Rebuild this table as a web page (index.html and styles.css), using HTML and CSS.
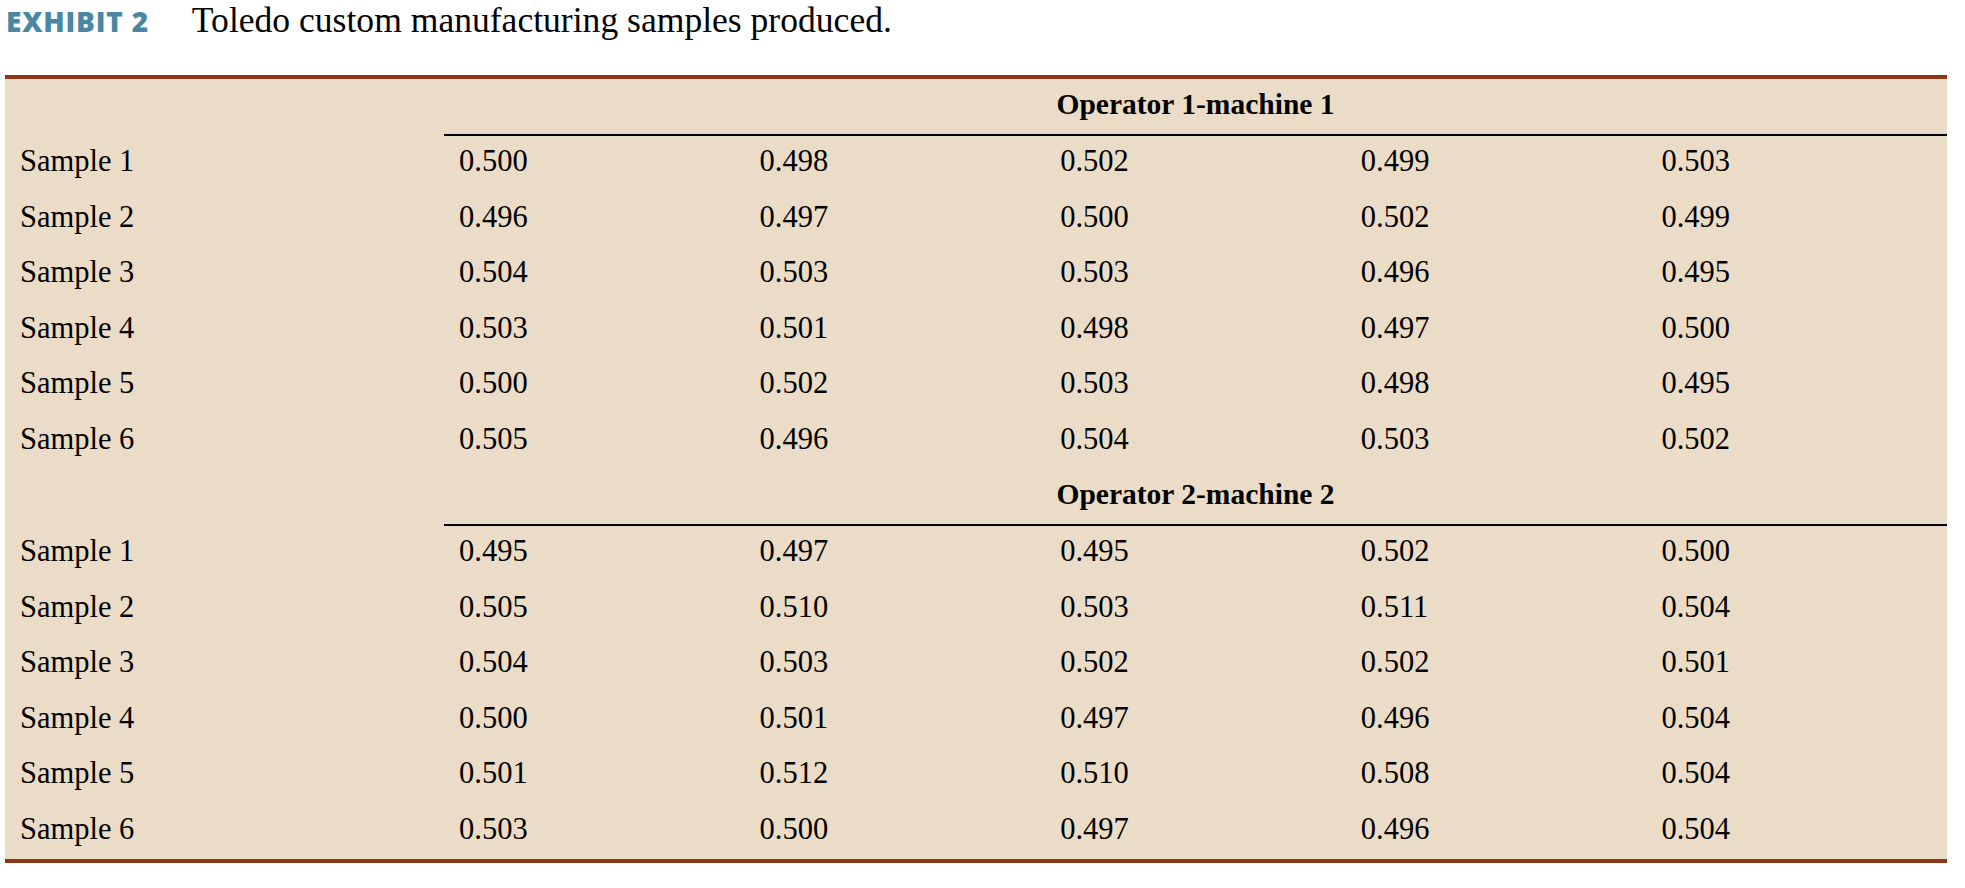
FILE: index.html
```html
<!DOCTYPE html>
<html lang="en">
<head>
<meta charset="utf-8">
<title>Exhibit 2</title>
<link rel="stylesheet" href="styles.css">
</head>
<body>
<div class="exhibit">
  <div class="caption">
    <span class="label">EXHIBIT 2</span>
    <span class="title">Toledo custom manufacturing samples produced.</span>
  </div>
  <div class="table">
    <div class="group-head"><div></div><div class="head">Operator 1-machine 1</div></div>
    <div class="row"><div>Sample 1</div><div>0.500</div><div>0.498</div><div>0.502</div><div>0.499</div><div>0.503</div></div>
    <div class="row"><div>Sample 2</div><div>0.496</div><div>0.497</div><div>0.500</div><div>0.502</div><div>0.499</div></div>
    <div class="row"><div>Sample 3</div><div>0.504</div><div>0.503</div><div>0.503</div><div>0.496</div><div>0.495</div></div>
    <div class="row"><div>Sample 4</div><div>0.503</div><div>0.501</div><div>0.498</div><div>0.497</div><div>0.500</div></div>
    <div class="row"><div>Sample 5</div><div>0.500</div><div>0.502</div><div>0.503</div><div>0.498</div><div>0.495</div></div>
    <div class="row"><div>Sample 6</div><div>0.505</div><div>0.496</div><div>0.504</div><div>0.503</div><div>0.502</div></div>
    <div class="group-head"><div></div><div class="head">Operator 2-machine 2</div></div>
    <div class="row"><div>Sample 1</div><div>0.495</div><div>0.497</div><div>0.495</div><div>0.502</div><div>0.500</div></div>
    <div class="row"><div>Sample 2</div><div>0.505</div><div>0.510</div><div>0.503</div><div>0.511</div><div>0.504</div></div>
    <div class="row"><div>Sample 3</div><div>0.504</div><div>0.503</div><div>0.502</div><div>0.502</div><div>0.501</div></div>
    <div class="row"><div>Sample 4</div><div>0.500</div><div>0.501</div><div>0.497</div><div>0.496</div><div>0.504</div></div>
    <div class="row"><div>Sample 5</div><div>0.501</div><div>0.512</div><div>0.510</div><div>0.508</div><div>0.504</div></div>
    <div class="row"><div>Sample 6</div><div>0.503</div><div>0.500</div><div>0.497</div><div>0.496</div><div>0.504</div></div>
  </div>
</div>
</body>
</html>
```

FILE: styles.css
```css
html, body {
  margin: 0;
  padding: 0;
  background: #ffffff;
}

.exhibit {
  font-family: "Liberation Serif", "Times New Roman", serif;
  color: #000;
}

.caption {
  display: flex;
  align-items: baseline;
  height: 40px;
  line-height: 40px;
  padding-left: 6px;
  margin-bottom: 35px;
}

.label {
  font-family: "Open Sans", "Liberation Sans", sans-serif;
  font-weight: 800;
  font-size: 28px;
  letter-spacing: 0.8px;
  color: #4a87a3;
  margin-right: 43px;
}

.title {
  font-size: 35.6px;
}

.table {
  margin-left: 5px;
  width: 1942px;
  background: #ebdcc7;
  border-top: 4px solid #8c3616;
  border-bottom: 4px solid #8c3616;
}

.group-head,
.row {
  display: grid;
  grid-template-columns: 439px repeat(5, 1fr);
}

.head {
  grid-column: 2 / span 5;
  text-align: center;
  font-weight: 700;
  font-size: 29.5px;
  line-height: 50px;
  padding-bottom: 5px;
  border-bottom: 2px solid #000;
}

.row {
  font-size: 30.5px;
  line-height: 51.5px;
  padding-bottom: 4px;
}

.row > div {
  padding-left: 15px;
  white-space: nowrap;
}
```
